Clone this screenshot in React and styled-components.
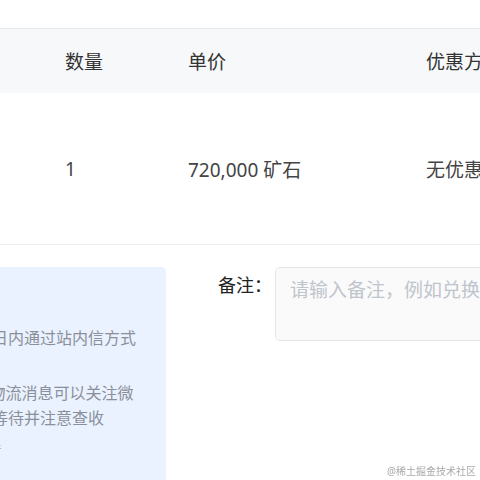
import React from 'react';
import styled, { createGlobalStyle } from 'styled-components';

const GlobalStyle = createGlobalStyle`
  html, body {
    margin: 0;
    padding: 0;
    background: #fff;
    overflow: hidden;
  }
  body {
    font-family: "Noto Sans", "Noto Sans CJK SC", sans-serif;
  }
`;

const Page = styled.div`
  width: 900px;
  margin-left: -200px;
  padding-top: 28px;
`;

const Table = styled.div`
  border-top: 1px solid #e5e6eb;
  border-bottom: 1px solid #ebedf0;
`;

const Row = styled.div`
  display: grid;
  grid-template-columns: 249px 123px 238px 1fr;
  align-items: center;
  height: ${(p) => p.$height}px;
  background: ${(p) => (p.$head ? '#f7f8fa' : '#fff')};
`;

const Cell = styled.div`
  padding-left: 16px;
  font-size: 19px;
  color: ${(p) => (p.$head ? '#333' : '#444')};
  white-space: nowrap;
`;

const Bottom = styled.div`
  display: flex;
  align-items: flex-start;
  margin-top: 22px;
`;

const Notice = styled.div`
  width: 334px;
  height: 240px;
  padding: 16px;
  border-radius: 5px;
  background: #eaf2ff;
  flex-shrink: 0;
`;

const NoticeTitle = styled.div`
  font-size: 16px;
  line-height: 25px;
  font-weight: 600;
  color: #4e5969;
  margin-bottom: 18px;
`;

const NoticePara = styled.div`
  margin-bottom: 5px;
`;

const NoticeLine = styled.div`
  font-size: 16px;
  line-height: 25px;
  color: #8a909a;
  white-space: nowrap;
`;

const NoticeTip = styled.div`
  font-size: 11.6px;
  line-height: 24px;
  color: #8fb3ee;
  white-space: nowrap;
`;

const RemarkField = styled.div`
  display: flex;
  align-items: flex-start;
  margin-left: 52px;
`;

const RemarkLabel = styled.label`
  font-size: 18px;
  line-height: 36px;
  color: #222;
  width: 57px;
  white-space: nowrap;
`;

const RemarkInput = styled.textarea`
  box-sizing: border-box;
  width: 520px;
  height: 74px;
  padding: 8px 14px;
  border: 1px solid #e5e6eb;
  border-radius: 5px;
  background: #fafafa;
  font-family: inherit;
  font-size: 19px;
  line-height: 28px;
  color: #333;
  resize: none;
  outline: none;

  &::placeholder {
    color: #c0c4cc;
  }
`;

const Watermark = styled.div`
  position: fixed;
  right: 4px;
  bottom: 2px;
  font-size: 10px;
  color: #a9a9a9;
  text-shadow: 0 0 2px #fff;
`;

export default function App() {
  return (
    <>
      <GlobalStyle />
      <Page>
        <Table>
          <Row $head $height={64}>
            <Cell $head>商品信息</Cell>
            <Cell $head>数量</Cell>
            <Cell $head>单价</Cell>
            <Cell $head>优惠方式</Cell>
          </Row>
          <Row $height={151}>
            <Cell>掘金周边礼盒</Cell>
            <Cell>1</Cell>
            <Cell>720,000 矿石</Cell>
            <Cell>无优惠</Cell>
          </Row>
        </Table>
        <Bottom>
          <Notice>
            <NoticeTitle>兑换须知</NoticeTitle>
            <NoticePara>
              <NoticeLine>兑换成功后将于七个工作日内通过站内信方式</NoticeLine>
              <NoticeLine>通知发货结果</NoticeLine>
            </NoticePara>
            <NoticePara>
              <NoticeLine>2.如需实时了解该商品的物流消息可以关注微</NoticeLine>
              <NoticeLine>信公众号查看进度请耐心等待并注意查收</NoticeLine>
            </NoticePara>
            <NoticeTip>如有任何疑问请联系官方客服小助手</NoticeTip>
          </Notice>
          <RemarkField>
            <RemarkLabel>备注：</RemarkLabel>
            <RemarkInput placeholder="请输入备注，例如兑换商品的颜色、尺码等信息" />
          </RemarkField>
        </Bottom>
      </Page>
      <Watermark>@稀土掘金技术社区</Watermark>
    </>
  );
}
